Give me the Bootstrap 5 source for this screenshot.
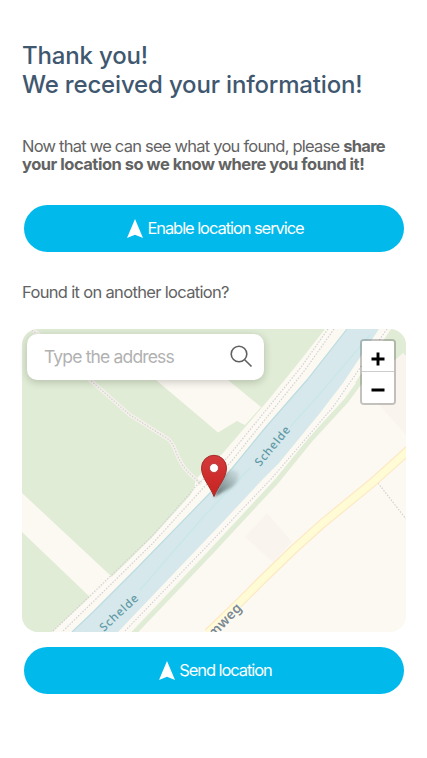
<!DOCTYPE html>
<html lang="en">
<head>
<meta charset="utf-8">
<meta name="viewport" content="width=device-width, initial-scale=1">
<title>Share your location</title>
<link href="https://cdn.jsdelivr.net/npm/bootstrap@5.3.0/dist/css/bootstrap.min.css" rel="stylesheet">
<style>
body{font-family:Inter,"Liberation Sans",sans-serif;color:#636363;background:#fff;font-size:16.5px;line-height:18.5px;letter-spacing:-.7px}
.page{padding:41px 21px 0 22px}
.headline{font-size:24px;line-height:29px;font-weight:500;letter-spacing:-.17px;color:#40586f;margin-bottom:37.5px}
.intro{margin-bottom:31.5px;white-space:nowrap;letter-spacing:-.77px}
.intro strong{font-weight:700;letter-spacing:-.72px}
.intro .second{letter-spacing:-.48px}
.cta{height:46.5px;margin:0 2px 0 2px;background:#02b9eb!important;font-size:16.5px;letter-spacing:-1.07px;line-height:20px;width:380px}
.cta svg{margin-right:4px;margin-left:3px}
.question{margin:31.5px 0 27.5px;letter-spacing:-.67px}
.map-box{width:384px;height:303px;border-radius:16px;margin-bottom:15px}
.map-box>svg{border-radius:16px;display:block}
.search{left:5px;top:5px;width:237px;height:45.5px;border-radius:10px;box-shadow:0 2px 9px rgba(0,0,0,.2)}
.search input{font-size:17.5px;letter-spacing:-.84px;padding:0 0 1px 17px;color:#636363;min-width:0}
.search input::placeholder{color:#b1b1b1;opacity:1}
.search input:focus{box-shadow:none}
.search svg{margin:0 10px 2px 0}
.zoomer{left:338px;top:10px;width:36px;height:66px;border:2px solid rgba(0,0,0,.22);border-radius:4px;background-clip:padding-box}
.zoomer button{height:31px;border:0;background:#fff;padding:4px 0 0}
.zoomer button:first-child{border-bottom:1px solid #ccc;padding-top:5px}
</style>
</head>
<body>
<main class="page">
  <h1 class="headline">Thank you!<br>We received your information!</h1>
  <p class="intro">Now that we can see what you found, please <strong>share<br><span class="second">your location so we know where you found it!</span></strong></p>
  <button class="cta btn btn-info border-0 rounded-pill text-white d-flex align-items-center justify-content-center p-0" type="button"><svg width="16" height="19" viewBox="0 0 16 19"><path d="M8 0L16 19L8 15.7L0 19Z" fill="#fff"/></svg><span>Enable location service</span></button>
  <p class="question">Found it on another location?</p>
  <div class="map-box position-relative">
    <svg width="384" height="303" viewBox="22 329 384 303">
      <rect x="22" y="329" width="384" height="303" fill="#fcf9f2"/>
      <path fill="#e0ecd5" d="M22 329H325L300 361L270 398L223 453L199 476Q194 482 195 486L187 502L153 537L112 577L90 597L52 632H22Z"/>
      <path fill="#fcf9f2" d="M156 380L218 432.500L237 421L245 425L261 407L228 380L202 359H131ZM22 493L112 577L90 597L22 532Z"/>
      <path fill="#f9f4ee" d="M403 353L406 356V435L382 408L360 385ZM267 513L292 542L273 562L245 537Z"/>
      <path fill="#e0ecd5" d="M391 329H406V356L403 353L395 360L362 384L355 383Z"/>
      <path fill="none" stroke="#e0ecd5" stroke-width="5" d="M368 371L346 401L311 439L276 482L211 552L133 634"/>
      <path fill="#d6e8eb" d="M347 329L307 380L265 428L225 477L210 493L137 568L93 612L72 632H118L220 525L262 480L279 463L320 413L343 383L379 329Z"/>
      <path fill="none" stroke="#bcdce1" stroke-width="1.2" d="M347 329L307 380L265 428L225 477L210 493L137 568L93 612L72 632"/>
      <path fill="none" stroke="#c8e7e9" stroke-width="1.3" d="M370 335L318 396L290 427M250 468L205 515L140 590"/>
      <g fill="none" stroke="#fdfaf6" stroke-width="3.5">
        <path d="M331 329L303 369L229 460L202 485L153 539L95 596L57 632M387 329L362 365L333 407L272 478L210 543L124 632"/>
      </g>
      <path fill="none" stroke="#f4f1ea" stroke-width="4" d="M32 329L42 337L90 380L130 415L168 439Q173 443 176 452Q181 465 188 472L201 484"/>
      <g fill="none" stroke="#d2d2d2" stroke-width="1.2" stroke-dasharray="1.5 1.5">
        <path d="M328 329L302 366L227 458L198 484L153 535L93 593L52 632M334 329L305 370L230 463L205 486L153 543L97 598L62 632M387 329L362 365L333 407L272 478L210 543L124 632M32 330L42 338L90 380L130 415L168 439Q173 443 176 452Q181 465 188 472L201 484M378 483L406 519"/>
      </g>
      <path fill="none" stroke="#fde9c6" stroke-width="9.500" d="M411 448L372 483L323 523L293 550L263 579L240 602L208 633"/>
      <path fill="none" stroke="#fffbd5" stroke-width="7" d="M411 448L372 483L323 523L293 550L263 579L240 602L208 633"/>
      <g font-family="'Noto Sans',sans-serif" fill="#6099a5" stroke="#d6e8eb" stroke-width="1" paint-order="stroke" font-size="11.500" font-weight="500" letter-spacing="1.1">
        <text transform="translate(260 467) rotate(-50)" letter-spacing=".9">Schelde</text>
        <text transform="translate(104 632) rotate(-43)" letter-spacing=".9">Schelde</text>
      </g>
      <text transform="translate(242.500 608.500) rotate(-46)" text-anchor="end" font-family="'Noto Sans',sans-serif" font-size="13.500" font-weight="600" letter-spacing=".3" fill="#7b8994" stroke="#fffdf0" stroke-width="1.5" paint-order="stroke">mweg</text>
      <defs>
        <linearGradient id="pin" x1="0" y1="0" x2="0" y2="1"><stop offset="0" stop-color="#d43b3c"/><stop offset="1" stop-color="#c7221f"/></linearGradient>
        <linearGradient id="shade" x1="0" y1="1" x2="1" y2="0"><stop offset="0" stop-color="#344" stop-opacity=".8"/><stop offset="1" stop-color="#566" stop-opacity=".04"/></linearGradient>
        <filter id="soft" x="-30%" y="-30%" width="160%" height="160%"><feGaussianBlur stdDeviation="1.8"/></filter>
      </defs>
      <path d="M214 497L223 475Q231 467 238 472Q242 478 232 487Z" fill="url(#shade)" filter="url(#soft)"/>
      <path d="M214 496.500C210 486 201.500 478 201.500 467.800A12.500 12.500 0 0 1 226.500 467.800C226.500 478 218 486 214 496.500Z" fill="url(#pin)" stroke="#a62c2b"/>
      <circle cx="214" cy="468" r="4.500" fill="#fff" stroke="#ae2729" stroke-width=".8"/>
    </svg>
    <div class="search position-absolute bg-white d-flex align-items-center">
      <input class="form-control border-0 bg-transparent h-100" type="text" placeholder="Type the address" aria-label="Address">
      <svg class="flex-shrink-0" width="26" height="26" viewBox="0 0 26 26" fill="none" stroke="#606060" stroke-width="1.600"><circle cx="11" cy="11" r="7.800"/><path d="M16.700 16.700L23.500 23.500"/></svg>
    </div>
    <div class="zoomer position-absolute bg-white d-flex flex-column overflow-hidden">
      <button type="button" aria-label="Zoom in"><svg class="d-block mx-auto" width="14" height="14" viewBox="0 0 14 14"><path d="M.5 7H13.500M7 .5V13.500" stroke="#000" stroke-width="2.900"/></svg></button>
      <button type="button" aria-label="Zoom out"><svg class="d-block mx-auto" width="14" height="14" viewBox="0 0 14 14"><path d="M.5 7H13.500" stroke="#000" stroke-width="2.900"/></svg></button>
    </div>
  </div>
  <button class="cta btn btn-info border-0 rounded-pill text-white d-flex align-items-center justify-content-center p-0" type="button"><svg width="16" height="19" viewBox="0 0 16 19"><path d="M8 0L16 19L8 15.7L0 19Z" fill="#fff"/></svg><span>Send location</span></button>
</main>
<script src="https://cdn.jsdelivr.net/npm/bootstrap@5.3.0/dist/js/bootstrap.bundle.min.js"></script>
</body>
</html>
